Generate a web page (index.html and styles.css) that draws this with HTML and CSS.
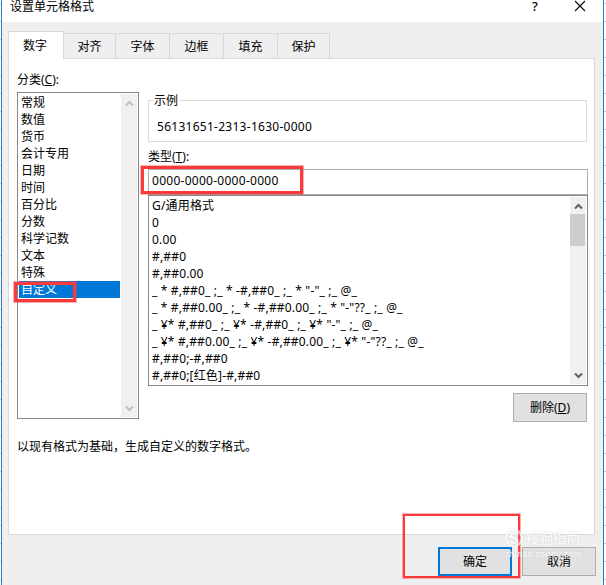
FILE: index.html
```
<!DOCTYPE html>
<html lang="zh-CN">
<head>
<meta charset="utf-8">
<title>设置单元格格式</title>
<link rel="stylesheet" href="styles.css">
</head>
<body>
<div class="sheet">
<div class="dialog">
  <header class="titlebar">
    <span class="title">设置单元格格式</span>
    <span class="help">?</span>
    <svg class="close" width="12" height="12" viewBox="0 0 12 12"><path d="M1 1L11 11M11 1L1 11" stroke="#111" stroke-width="1.2"/></svg>
  </header>
  <nav class="tabs">
    <span class="tab active">数字</span><span class="tab t52">对齐</span><span class="tab">字体</span><span class="tab">边框</span><span class="tab">填充</span><span class="tab t52">保护</span>
  </nav>
  <main class="panel">
    <div class="columns">
      <section class="category">
        <div class="label">分类(<u>C</u>):</div>
        <div class="listbox">
          <ul class="items">
            <li>常规</li><li>数值</li><li>货币</li><li>会计专用</li><li>日期</li><li>时间</li><li>百分比</li><li>分数</li><li>科学记数</li><li>文本</li><li>特殊</li><li class="selected">自定义</li>
          </ul>
          <div class="scroll disabled">
            <svg width="9" height="7" viewBox="0 0 9 7"><path d="M1 5.5L4.5 2L8 5.5"/></svg>
            <svg width="9" height="7" viewBox="0 0 9 7"><path d="M1 1.5L4.5 5L8 1.5"/></svg>
          </div>
          <div class="mark mark-category"></div>
        </div>
      </section>
      <section class="format">
        <div class="sample"><span class="legend">示例</span><span class="value">56131651-2313-1630-0000</span></div>
        <div class="label type-label">类型(<u>T</u>):</div>
        <div class="input"><span class="typed">0000-0000-0000-0000</span><div class="mark mark-input"></div></div>
        <div class="formats">
          <ul class="items">
            <li>G/通用格式</li><li>0</li><li>0.00</li><li>#,##0</li><li>#,##0.00</li>
            <li>_ * #,##0_ ;_ * -#,##0_ ;_ * "-"_ ;_ @_ </li>
            <li>_ * #,##0.00_ ;_ * -#,##0.00_ ;_ * "-"??_ ;_ @_ </li>
            <li>_ ¥* #,##0_ ;_ ¥* -#,##0_ ;_ ¥* "-"_ ;_ @_ </li>
            <li>_ ¥* #,##0.00_ ;_ ¥* -#,##0.00_ ;_ ¥* "-"??_ ;_ @_ </li>
            <li>#,##0;-#,##0</li><li>#,##0;[红色]-#,##0</li>
          </ul>
          <div class="scroll">
            <svg width="9" height="7" viewBox="0 0 9 7"><path d="M1 5.5L4.5 2L8 5.5"/></svg>
            <div class="thumb"></div>
            <svg width="9" height="7" viewBox="0 0 9 7"><path d="M1 1.5L4.5 5L8 1.5"/></svg>
          </div>
        </div>
        <button class="button delete">删除(<u>D</u>)</button>
      </section>
    </div>
    <p class="hint">以现有格式为基础，生成自定义的数字格式。</p>
  </main>
  <footer class="actions">
    <button class="button ok">确定</button>
    <button class="button">取消</button>
    <div class="mark mark-ok"></div>
    <div class="watermark">
      <svg width="18" height="18" viewBox="0 0 18 18"><circle cx="9" cy="9" r="8" fill="none" stroke="#fff" stroke-width="1.6"/><path d="M13 5.5C11 3.5 5.5 3.7 5.5 6.5C5.5 9.5 12.5 8.4 12.5 11.5C12.5 14.3 7 14.5 4.8 12.2" fill="none" stroke="#fff" stroke-width="2"/></svg>
      <span class="brand">搜狗指南</span>
      <span class="site">zhinan.sogou.com</span>
    </div>
  </footer>
</div>
</div>
</body>
</html>
```
FILE: styles.css
```
* { box-sizing: border-box; }
body {
  margin: 0;
  overflow: hidden;
  color: #000;
  font: 12px/17px "Noto Sans", "Noto Sans CJK SC", sans-serif;
}
u { text-underline-offset: 1px; }
.sheet {
  width: 606px;
  height: 585px;
  padding: 0 2px 0 1px;
  background: repeating-linear-gradient(#fff 0 3px, #c8c8c8 3px 4px, #fff 4px 18px);
}
.dialog {
  height: 585px;
  background: #efefef;
  border: solid #267fc0;
  border-width: 0 1px;
}
.titlebar {
  display: flex;
  height: 22px;
  padding: 0 17px 0 8px;
  background: #fff;
  line-height: 13px;
}
.title { flex: 1; }
.help { width: 42px; font-size: 13px; font-weight: 500; }
.close { display: block; }
.tabs {
  display: flex;
  align-items: flex-end;
  height: 37px;
  padding-left: 6px;
  margin-bottom: -1px;
  position: relative;
}
.tab {
  width: 54px;
  height: 26px;
  border: 1px solid #d9d9d9;
  border-left: 0;
  text-align: center;
  line-height: 25px;
}
.tab.t52 { width: 52px; }
.tab.active {
  width: 56px;
  height: 28px;
  background: #fff;
  border-left: 1px solid #d9d9d9;
  border-bottom: 0;
  line-height: 27px;
  padding-right: 2px;
}
.panel {
  width: 587px;
  height: 477px;
  margin-left: 6px;
  padding: 12px 6px 0 8px;
  background: #fff;
  border: 1px solid #d9d9d9;
}
.columns { display: flex; gap: 9px; }
.category { width: 122px; }
.label { height: 21px; }
.listbox {
  display: flex;
  height: 327px;
  border: 1px solid #828790;
  padding: 1px;
  position: relative;
}
.items {
  flex: 1;
  list-style: none;
  margin: 0;
  padding: 0;
}
.listbox .items { margin-right: 1px; }
.listbox li { padding-left: 2px; }
.selected { background: #0078d7; color: #fff; }
.scroll {
  display: flex;
  flex-direction: column;
  align-items: center;
  width: 16px;
  padding: 6px 0 5px;
  background: #f0f0f0;
}
.scroll svg path { fill: none; stroke: #606060; stroke-width: 2; }
.scroll svg:last-child { margin-top: auto; }
.scroll.disabled svg path { stroke: #bfbfbf; }
.format { width: 440px; padding-top: 29px; display: flex; flex-direction: column; }
.sample {
  width: 439px;
  height: 42px;
  border: 1px solid #dcdcdc;
  padding: 17px 8px 0;
  position: relative;
}
.legend {
  position: absolute;
  left: 4px;
  top: -9px;
  padding: 0 1px;
  background: #fff;
}
.value, .typed { letter-spacing: .27px; }
.type-label { height: 27px; padding-top: 6px; }
.input {
  height: 26px;
  border: 1px solid #acacb3;
  padding: 2px 3px;
  position: relative;
}
.formats {
  display: flex;
  height: 191px;
  border: 1px solid #828790;
  padding: 1px;
}
.formats li { padding-left: 2px; white-space: pre; letter-spacing: .17px; }
.thumb { width: 15px; height: 32px; margin-top: 4px; align-self: flex-start; background: #cdcdcd; }
.button {
  width: 74px;
  height: 29px;
  padding: 0;
  border: 1px solid #adadad;
  background: #e1e1e1;
  color: #000;
  font: inherit;
}
.delete { align-self: flex-end; margin: 7px 1px 0 0; }
.hint { margin: 16px 0 0; }
.actions {
  display: flex;
  justify-content: flex-end;
  gap: 10px;
  padding: 12px 7px 0;
  position: relative;
}
.ok { border: 2px solid #0078d7; }
.mark {
  position: absolute;
  border: 3px solid #fa3b3c;
  box-shadow: 0 0 0 1px #ff3b3b66;
}
.mark-category { left: -4px; top: 189px; width: 62px; height: 20px; }
.mark-input { left: -8px; top: -4px; width: 162px; height: 28px; }
.mark-ok { left: 401px; top: -21px; width: 117px; height: 64px; border-width: 2px; }
.watermark {
  position: absolute;
  left: 503px;
  top: -6px;
  width: 78px;
  display: grid;
  grid-template-columns: 18px 1fr;
  column-gap: 3px;
  color: #fff;
  opacity: .75;
  filter: drop-shadow(0 0 1px #d0d0d0);
}
.brand { font-size: 13.5px; line-height: 18px; }
.site { grid-column: 1 / 3; font-size: 8px; line-height: 14px; letter-spacing: .5px; white-space: nowrap; }
```
